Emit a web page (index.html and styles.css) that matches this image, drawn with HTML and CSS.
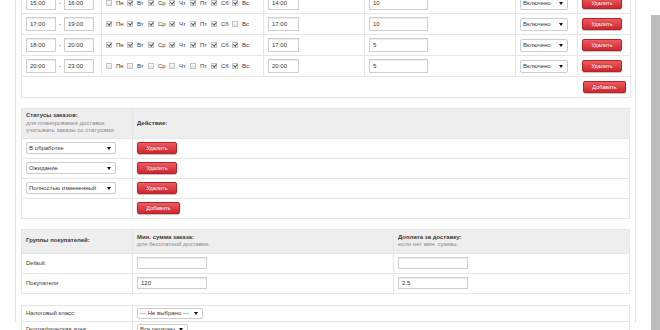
FILE: index.html
```html
<!DOCTYPE html>
<html lang="ru">
<head>
    <meta charset="UTF-8">
    <title>Доставка по времени</title>
    <link rel="stylesheet" href="styles.css">
</head>
<body>
<div class="screen">
  <div class="page">
    <div class="panel">

      <table class="grid schedule">
        <colgroup><col style="width:80px"><col style="width:162px"><col style="width:101px"><col style="width:151px"><col style="width:62px"><col style="width:53px"></colgroup>
        <tr>
          <td><input class="field time" value="15:00"><span class="dash">-</span><input class="field time" value="16:00"></td>
          <td class="days"><span class="day"><i class="cb"></i>Пн</span><span class="day"><i class="cb on"></i>Вт</span><span class="day"><i class="cb on"></i>Ср</span><span class="day"><i class="cb on"></i>Чт</span><span class="day"><i class="cb on"></i>Пт</span><span class="day"><i class="cb on"></i>Сб</span><span class="day"><i class="cb on"></i>Вс</span></td>
          <td><input class="field stop" value="14:00"></td>
          <td><input class="field limit" value="10"></td>
          <td><span class="select state">Включено</span></td>
          <td><button class="btn">Удалить</button></td>
        </tr>
        <tr>
          <td><input class="field time" value="17:00"><span class="dash">-</span><input class="field time" value="19:00"></td>
          <td class="days"><span class="day"><i class="cb on"></i>Пн</span><span class="day"><i class="cb on"></i>Вт</span><span class="day"><i class="cb on"></i>Ср</span><span class="day"><i class="cb on"></i>Чт</span><span class="day"><i class="cb on"></i>Пт</span><span class="day"><i class="cb on"></i>Сб</span><span class="day"><i class="cb"></i>Вс</span></td>
          <td><input class="field stop" value="17:00"></td>
          <td><input class="field limit" value="10"></td>
          <td><span class="select state">Включено</span></td>
          <td><button class="btn">Удалить</button></td>
        </tr>
        <tr>
          <td><input class="field time" value="18:00"><span class="dash">-</span><input class="field time" value="20:00"></td>
          <td class="days"><span class="day"><i class="cb on"></i>Пн</span><span class="day"><i class="cb on"></i>Вт</span><span class="day"><i class="cb on"></i>Ср</span><span class="day"><i class="cb on"></i>Чт</span><span class="day"><i class="cb on"></i>Пт</span><span class="day"><i class="cb on"></i>Сб</span><span class="day"><i class="cb on"></i>Вс</span></td>
          <td><input class="field stop" value="17:00"></td>
          <td><input class="field limit" value="5"></td>
          <td><span class="select state">Включено</span></td>
          <td><button class="btn">Удалить</button></td>
        </tr>
        <tr>
          <td><input class="field time" value="20:00"><span class="dash">-</span><input class="field time" value="23:00"></td>
          <td class="days"><span class="day"><i class="cb"></i>Пн</span><span class="day"><i class="cb"></i>Вт</span><span class="day"><i class="cb"></i>Ср</span><span class="day"><i class="cb"></i>Чт</span><span class="day"><i class="cb"></i>Пт</span><span class="day"><i class="cb on"></i>Сб</span><span class="day"><i class="cb on"></i>Вс</span></td>
          <td><input class="field stop" value="20:00"></td>
          <td><input class="field limit" value="5"></td>
          <td><span class="select state">Включено</span></td>
          <td><button class="btn">Удалить</button></td>
        </tr>
        <tr class="add-row">
          <td colspan="6" class="right"><button class="btn add">Добавить</button></td>
        </tr>
      </table>

      <table class="grid statuses">
        <colgroup><col style="width:111px"><col></colgroup>
        <tr>
          <th>Статусы заказов:<span class="sub">для планирования доставок</span><span class="sub">учитывать заказы со статусами</span></th>
          <th>Действие:</th>
        </tr>
        <tr>
          <td><span class="select status">В обработке</span></td>
          <td><button class="btn">Удалить</button></td>
        </tr>
        <tr>
          <td><span class="select status">Ожидание</span></td>
          <td><button class="btn">Удалить</button></td>
        </tr>
        <tr>
          <td><span class="select status">Полностью измененный</span></td>
          <td><button class="btn">Удалить</button></td>
        </tr>
        <tr>
          <td></td>
          <td><button class="btn add">Добавить</button></td>
        </tr>
      </table>

      <table class="grid groups">
        <colgroup><col style="width:111px"><col style="width:261px"><col></colgroup>
        <tr>
          <th>Группы покупателей:</th>
          <th>Мин. сумма заказа:<span class="sub">для бесплатной доставки.</span></th>
          <th>Доплата за доставку:<span class="sub">если нет мин. суммы.</span></th>
        </tr>
        <tr>
          <td>Default</td>
          <td><input class="field sum" value=""></td>
          <td><input class="field sum" value=""></td>
        </tr>
        <tr>
          <td>Покупатели</td>
          <td><input class="field sum" value="120"></td>
          <td><input class="field sum" value="2.5"></td>
        </tr>
      </table>

      <table class="grid misc">
        <colgroup><col style="width:111px"><col></colgroup>
        <tr>
          <td>Налоговый класс:</td>
          <td><span class="select tax">--- Не выбрано ---</span></td>
        </tr>
        <tr>
          <td>Географическая зона:</td>
          <td><span class="select zone">Все регионы</span></td>
        </tr>
      </table>

    </div>
  </div>
  <div class="scrollbar"><div class="thumb"></div></div>
</div>
</body>
</html>
```

FILE: styles.css
```css
body {
    margin: 0;
    font-family: "Liberation Sans", Arial, sans-serif;
    font-size: 6px;
    color: #3a3a3a;
    background: #fff;
}
.screen {
    display: flex;
    height: 330px;
    overflow: hidden;
}
.page {
    width: 651px;
    padding-left: 15px;
    box-sizing: border-box;
}
.panel {
    width: 621px;
    height: 100%;
    box-sizing: border-box;
    border-left: 1px solid #e3e3e3;
    border-right: 1px solid #e3e3e3;
    padding: 0 5px;
}
.scrollbar {
    width: 9px;
    padding-top: 15px;
}
.thumb {
    height: 100%;
    background: #bdbdbd;
}

/* tables */
.grid {
    width: 609px;
    border-collapse: collapse;
    table-layout: fixed;
    border: 1px solid #e6e6e6;
    margin-top: 10px;
}
.grid td, .grid th {
    border: 1px solid #e6e6e6;
    padding: 0 4px;
    text-align: left;
    vertical-align: middle;
    white-space: nowrap;
}
.grid td {
    height: 20px;
    box-sizing: border-box;
}
.grid th {
    background: #eee;
    font-weight: bold;
    line-height: 7.5px;
    padding-top: 3px;
    padding-bottom: 3px;
}
.sub {
    display: block;
    font-weight: normal;
    color: #8a8a8a;
}
.schedule {
    margin-top: -8px;
}
.schedule td {
    height: 21px;
}
.schedule .add-row td {
    height: 21px;
}
.statuses {
    margin-top: 10px;
}
.groups {
    margin-top: 10px;
}
.groups th {
    padding-top: 4px;
    padding-bottom: 4px;
}
.misc {
    margin-top: 11px;
}
.misc td {
    height: 16px;
}
.right {
    text-align: right !important;
}

/* form controls */
.field {
    box-sizing: border-box;
    height: 14px;
    border: 1px solid #cfcfcf;
    box-shadow: inset 0 1px 1px rgba(0, 0, 0, 0.08);
    font: 6px "Liberation Sans", Arial, sans-serif;
    color: #333;
    padding: 0 3px;
    vertical-align: middle;
    margin: 0;
}
.time { width: 30px; }
.stop { width: 31px; }
.limit { width: 59px; }
.sum { width: 70px; height: 12px; }
.dash {
    display: inline-block;
    margin: 0 3px;
    vertical-align: middle;
}

.day {
    display: inline-flex;
    align-items: center;
    width: 21px;
    vertical-align: middle;
}
.cb {
    position: relative;
    box-sizing: border-box;
    width: 6px;
    height: 6px;
    margin-right: 4px;
    border: 1px solid #c4c4c4;
    background: linear-gradient(#fbfbfb, #e4e4e4);
}
.cb.on::after {
    content: "";
    position: absolute;
    left: 1px;
    top: -1px;
    width: 1.5px;
    height: 3px;
    border-right: 1px solid #555;
    border-bottom: 1px solid #555;
    transform: rotate(40deg);
}

.select {
    position: relative;
    display: inline-block;
    box-sizing: border-box;
    height: 12px;
    line-height: 10px;
    border: 1px solid #cdcdcd;
    border-radius: 2px;
    background: #fff;
    padding-left: 2px;
    vertical-align: middle;
}
.select::after {
    content: "";
    position: absolute;
    right: 4px;
    top: 4px;
    border-left: 2px solid transparent;
    border-right: 2px solid transparent;
    border-top: 3px solid #111;
}
.state { width: 48px; height: 13px; line-height: 11px; }
.status { width: 90px; }
.tax { width: 66px; height: 11px; line-height: 9px; }
.tax::after, .zone::after { top: 3px; }
.zone { height: 11px; line-height: 9px; padding-right: 12px; }

.btn {
    box-sizing: border-box;
    width: 40px;
    height: 12px;
    padding: 0;
    border: 1px solid #b5232a;
    border-radius: 2px;
    background: linear-gradient(#ef5b60, #cf272e);
    box-shadow: 0 1px 1px rgba(0, 0, 0, 0.25);
    color: #fff;
    font: 5.5px "Liberation Sans", Arial, sans-serif;
    text-shadow: 0 -1px 0 rgba(0, 0, 0, 0.25);
    vertical-align: middle;
}
.btn.add {
    width: 43px;
}
```
